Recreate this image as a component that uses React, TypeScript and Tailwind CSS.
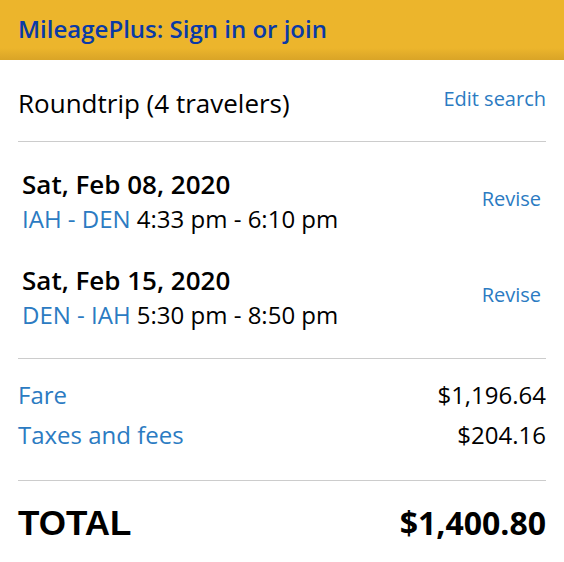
const trips = [
  { date: 'Sat, Feb 08, 2020', route: 'IAH - DEN', time: '4:33 pm - 6:10 pm' },
  { date: 'Sat, Feb 15, 2020', route: 'DEN - IAH', time: '5:30 pm - 8:50 pm' },
];

export default function App() {
  return (
    <div className="w-[564px] h-[562px] bg-white font-['Open_Sans',sans-serif] text-black overflow-hidden">
      {/* MileagePlus banner */}
      <div className="h-[60px] px-[18px] flex items-center bg-gradient-to-b from-[#ecb52c] from-80% to-[#d9a427]">
        <span className="text-[24px] font-semibold text-[#0a3aa6] leading-none -mt-[2px]">
          MileagePlus: Sign in or join
        </span>
      </div>

      <div className="px-[18px]">
        <div className="flex items-center justify-between pt-[28px] pb-[23px] border-b border-[#cccccc] leading-[30px]">
          <span className="text-[26px]">Roundtrip (4 travelers)</span>
          <a className="text-[20px] text-[#2b7bc2] -mt-[8px]">Edit search</a>
        </div>

        <div className="pl-[4px] pr-[5px] pt-[25px] pb-[25px] flex flex-col gap-[26px] border-b border-[#cccccc]">
          {trips.map((trip) => (
            <div key={trip.date} className="flex items-center justify-between">
              <div className="flex flex-col">
                <span className="text-[26px] font-semibold leading-[34px]">{trip.date}</span>
                <span className="text-[24px] leading-[36px]">
                  <span className="text-[#2b7bc2]">{trip.route}</span> {trip.time}
                </span>
              </div>
              <a className="text-[20px] text-[#2b7bc2] -mt-[6px]">Revise</a>
            </div>
          ))}
        </div>

        <div className="pt-[19px] pb-[28px] flex flex-col gap-[6px] border-b border-[#cccccc] text-[24px] leading-[34px]">
          <div className="flex justify-between">
            <span className="text-[#2b7bc2]">Fare</span>
            <span>$1,196.64</span>
          </div>
          <div className="flex justify-between">
            <span className="text-[#2b7bc2]">Taxes and fees</span>
            <span>$204.16</span>
          </div>
        </div>

        <div className="flex justify-between items-center pt-[22px] leading-[40px]">
          <span className="text-[35px] font-bold font-['Liberation_Sans',sans-serif]">TOTAL</span>
          <span className="text-[32px] font-bold">$1,400.80</span>
        </div>
      </div>
    </div>
  );
}
